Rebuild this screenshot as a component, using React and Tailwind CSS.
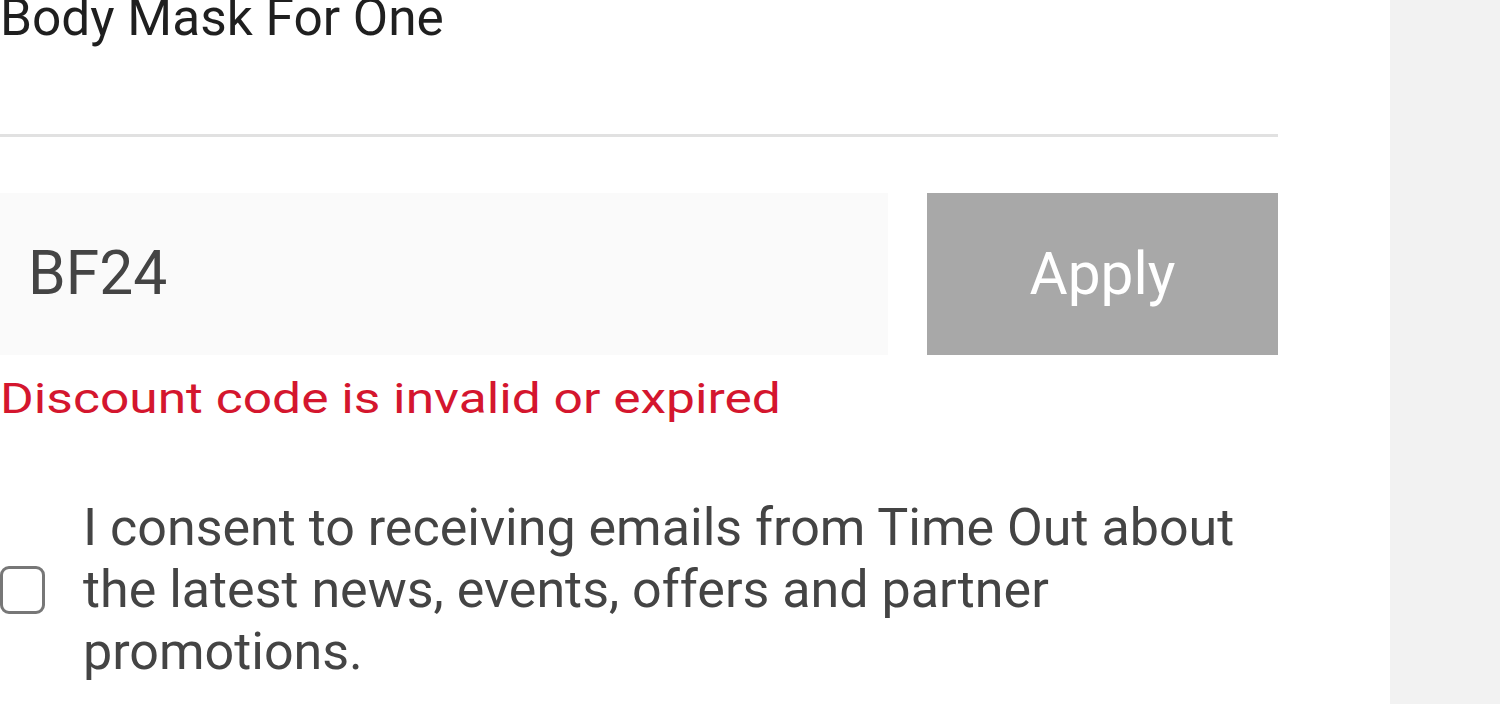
export default function App() {
  return (
    <div className="flex w-[1500px] h-[704px] overflow-hidden bg-white" style={{ fontFamily: "Roboto, 'Liberation Sans', sans-serif" }}>
      <div className="w-[1390px] shrink-0 bg-white">
        <div className="w-[1278px] flex flex-col">
          <p className="mt-[-8px] text-[51.4px] leading-none text-[#1f1f1f]">Body Mask For One</p>
          <div className="mt-[91px] h-[3px] bg-[#e1e1e1]" />
          <div className="mt-[56px] flex gap-[39px]">
            <div className="w-[888px] h-[162px] bg-[#fafafa] flex items-center pl-[28px]">
              <span className="text-[60.5px] leading-none text-[#444]">BF24</span>
            </div>
            <button className="flex-1 h-[162px] bg-[#a8a8a8] text-white text-[58.5px] leading-none flex items-center justify-center">
              Apply
            </button>
          </div>
          <p className="mt-[22px] text-[43px] leading-none text-[#d4162e] origin-left scale-x-[1.198] whitespace-nowrap">
            Discount code is invalid or expired
          </p>
          <div className="mt-[77px] flex items-center gap-[38px]">
            <div className="w-[45px] h-[48px] shrink-0 rounded-[9px] border-[3px] border-[#777] bg-white" />
            <p className="flex-1 text-[52px] leading-[62px] text-[#444]">
              I consent to receiving emails from Time Out about the latest news, events, offers and partner promotions.
            </p>
          </div>
        </div>
      </div>
      <div className="flex-1 bg-[#f2f2f2]" />
    </div>
  );
}
